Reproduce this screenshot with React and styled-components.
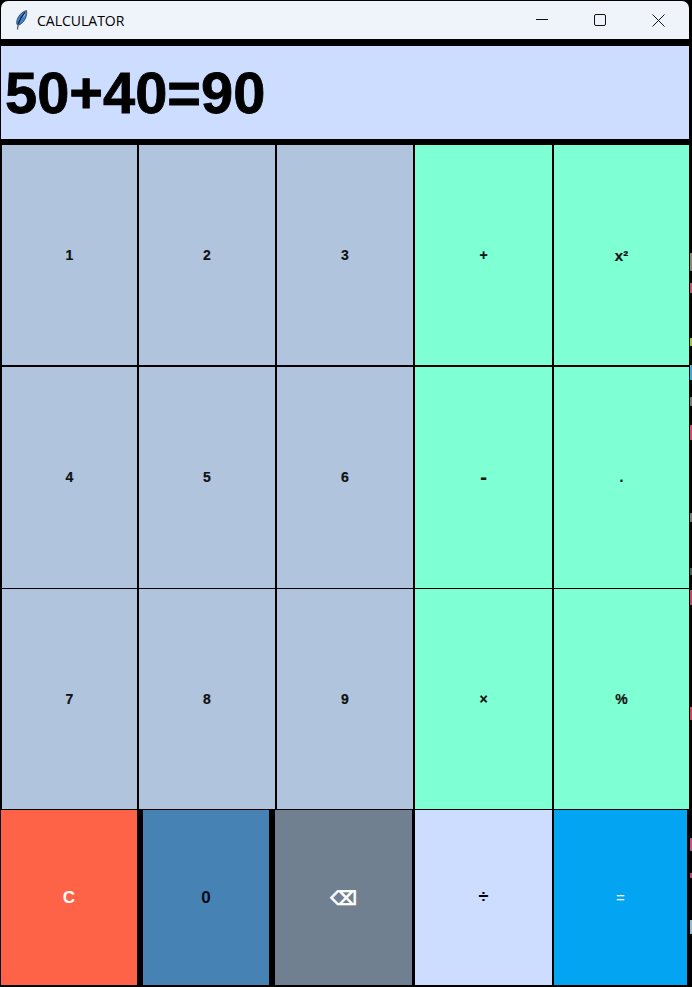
import React from "react";
import styled, { createGlobalStyle } from "styled-components";

const COLORS = {
  number: "#b0c4de",
  operator: "#7fffd4",
  clear: "#ff6347",
  zero: "#4682b4",
  back: "#708090",
  divide: "#ccddff",
  equals: "#03a5f2",
};

const GlobalStyle = createGlobalStyle`
  html, body {
    margin: 0;
    padding: 0;
    background: #0b0d10;
  }
`;

const FeatherIcon = () => (
  <svg width="13" height="20" viewBox="0 0 13 20">
    <path d="M2.5 19.5 C2.5 17.5 2.8 16 3.5 14" stroke="#59626b" strokeWidth="1.3" fill="none" />
    <path d="M2 14.5 C0.5 10 4.5 2.5 11.5 0.5 C12.5 6 9.5 12.5 4 15 Z" fill="#3f7fd0" stroke="#3a4b60" strokeWidth="0.9" />
    <path d="M3.2 14 C4.5 10 6.5 6 10 2.5" stroke="#14233a" strokeWidth="1.1" fill="none" />
    <path d="M8.5 7 L10.3 3.5" stroke="#a8cdf0" strokeWidth="0.8" fill="none" />
  </svg>
);

const MinimizeIcon = () => (
  <svg width="12" height="12" viewBox="0 0 12 12">
    <path d="M0 5.5H12" stroke="#111" strokeWidth="1" />
  </svg>
);

const MaximizeIcon = () => (
  <svg width="12" height="12" viewBox="0 0 12 12">
    <rect x="0.5" y="0.5" width="11" height="11" rx="1.5" fill="none" stroke="#111" />
  </svg>
);

const CloseIcon = () => (
  <svg width="13" height="13" viewBox="0 0 13 13">
    <path d="M0.5 0.5L12.5 12.5M12.5 0.5L0.5 12.5" stroke="#111" strokeWidth="1" />
  </svg>
);

const KEY_ROWS = [
  {
    height: 220,
    gap: 2,
    keys: [{ label: "1" }, { label: "2" }, { label: "3" }, { label: "+", size: 14 }, { label: "x²", size: 15 }],
  },
  {
    height: 220.5,
    gap: 1,
    keys: [{ label: "4" }, { label: "5" }, { label: "6" }, { label: "-", size: 20 }, { label: "." }],
  },
  {
    height: 220.5,
    gap: 1,
    keys: [{ label: "7" }, { label: "8" }, { label: "9" }, { label: "×", size: 14 }, { label: "%" }],
  },
];

const BOTTOM_KEYS = [
  { label: "C", color: COLORS.clear, ink: "#fff", size: 17, width: 136, gap: 0 },
  { label: "0", color: COLORS.zero, ink: "#050a14", size: 17, width: 126, gap: 6 },
  { label: "⌫", color: COLORS.back, ink: "#fff", size: 19, width: 137, gap: 6, symbol: true },
  { label: "÷", color: COLORS.divide, ink: "#000", size: 18, width: 137, gap: 3 },
  { label: "=", color: COLORS.equals, ink: "#fff", size: 15, width: 133, gap: 2, thin: true },
];

// bits of other windows showing at the right edge of the shot
const EDGE_SPECKS = [
  { top: 253, height: 18, color: "#8a8470" },
  { top: 283, height: 10, color: "#d8476f" },
  { top: 338, height: 8, color: "#a8c04a" },
  { top: 365, height: 15, color: "#4aa3d8" },
  { top: 397, height: 9, color: "#777" },
  { top: 425, height: 15, color: "#d8476f" },
  { top: 513, height: 9, color: "#777" },
  { top: 568, height: 7, color: "#555" },
  { top: 590, height: 15, color: "#c8405f" },
  { top: 707, height: 13, color: "#d84050" },
  { top: 838, height: 13, color: "#c8507f" },
  { top: 873, height: 5, color: "#c8406f" },
  { top: 920, height: 14, color: "#8ac0d8" },
];

const App = () => {
  return (
    <>
      <GlobalStyle />
      <Window>
        <TitleBar>
          <AppTitle>
            <FeatherIcon />
            <TitleText>CALCULATOR</TitleText>
          </AppTitle>
          <WindowControls>
            <ControlButton>
              <MinimizeIcon />
            </ControlButton>
            <ControlButton>
              <MaximizeIcon />
            </ControlButton>
            <ControlButton>
              <CloseIcon />
            </ControlButton>
          </WindowControls>
        </TitleBar>

        <Display>50+40=90</Display>

        {KEY_ROWS.map((row) => (
          <KeyRow key={row.keys[0].label} $height={row.height} $gap={row.gap}>
            {row.keys.map((item, index) => (
              <Key
                key={item.label}
                $color={index < 3 ? COLORS.number : COLORS.operator}
                $size={item.size}
              >
                {item.label}
              </Key>
            ))}
          </KeyRow>
        ))}

        <BottomRow>
          {BOTTOM_KEYS.map((item) => (
            <BottomKey
              key={item.label}
              $color={item.color}
              $ink={item.ink}
              $size={item.size}
              $width={item.width}
              $gap={item.gap}
              $symbol={item.symbol}
              $thin={item.thin}
            >
              {item.label}
            </BottomKey>
          ))}
        </BottomRow>

        {EDGE_SPECKS.map((speck) => (
          <EdgeSpeck key={speck.top} $top={speck.top} $height={speck.height} $color={speck.color} />
        ))}
      </Window>
    </>
  );
};

export default App;

const Window = styled.div`
  position: relative;
  width: 692px;
  height: 987px;
  display: flex;
  flex-direction: column;
  background: #000;
  overflow: hidden;
`;

const TitleBar = styled.header`
  flex: none;
  height: 38px;
  margin: 1px 3px 0 1px;
  padding-left: 14px;
  display: flex;
  justify-content: space-between;
  align-items: center;
  background: #eef4f9;
  border-radius: 7px 7px 0 0;
`;

const AppTitle = styled.div`
  display: flex;
  align-items: center;
  gap: 9px;
`;

const TitleText = styled.span`
  font-family: "Open Sans", sans-serif;
  font-size: 14px;
  color: #000;
`;

const WindowControls = styled.div`
  display: flex;
  margin-right: 1px;
`;

const ControlButton = styled.div`
  width: 58.5px;
  height: 38px;
  display: flex;
  align-items: center;
  justify-content: center;
`;

const Display = styled.div`
  flex: none;
  height: 93px;
  margin: 7px 3px 6px 1px;
  padding-left: 4px;
  display: flex;
  align-items: center;
  background: ${COLORS.divide};
  font-family: "Liberation Sans", sans-serif;
  font-size: 57.8px;
  font-weight: 700;
  color: #000;
  -webkit-text-stroke: 0.8px #000;
`;

const KeyRow = styled.div`
  flex: none;
  height: ${(props) => props.$height}px;
  margin-bottom: ${(props) => props.$gap}px;
  padding-left: 2px;
  display: grid;
  grid-template-columns: 135px 136px 136px 137px 135px;
  column-gap: 2px;
`;

const Key = styled.div`
  display: flex;
  align-items: center;
  justify-content: center;
  background: ${(props) => props.$color};
  color: #111;
  font-family: "Liberation Sans", sans-serif;
  font-size: ${(props) => props.$size || 14}px;
  font-weight: 700;
  -webkit-text-stroke: 0.2px #111;
`;

const BottomRow = styled.div`
  flex: none;
  height: 175px;
  padding-left: 1px;
  display: flex;
`;

const BottomKey = styled.div`
  flex: none;
  width: ${(props) => props.$width}px;
  margin-left: ${(props) => props.$gap}px;
  display: flex;
  align-items: center;
  justify-content: center;
  background: ${(props) => props.$color};
  color: ${(props) => props.$ink};
  font-family: ${(props) =>
    props.$symbol ? '"DejaVu Sans", sans-serif' : '"Liberation Sans", sans-serif'};
  font-size: ${(props) => props.$size}px;
  font-weight: ${(props) => (props.$thin ? 400 : 700)};
  -webkit-text-stroke: ${(props) => (props.$symbol ? "0.6px" : "0")} ${(props) => props.$ink};
`;

const EdgeSpeck = styled.span`
  position: absolute;
  right: 0;
  top: ${(props) => props.$top}px;
  width: 2px;
  height: ${(props) => props.$height}px;
  background: ${(props) => props.$color};
`;
